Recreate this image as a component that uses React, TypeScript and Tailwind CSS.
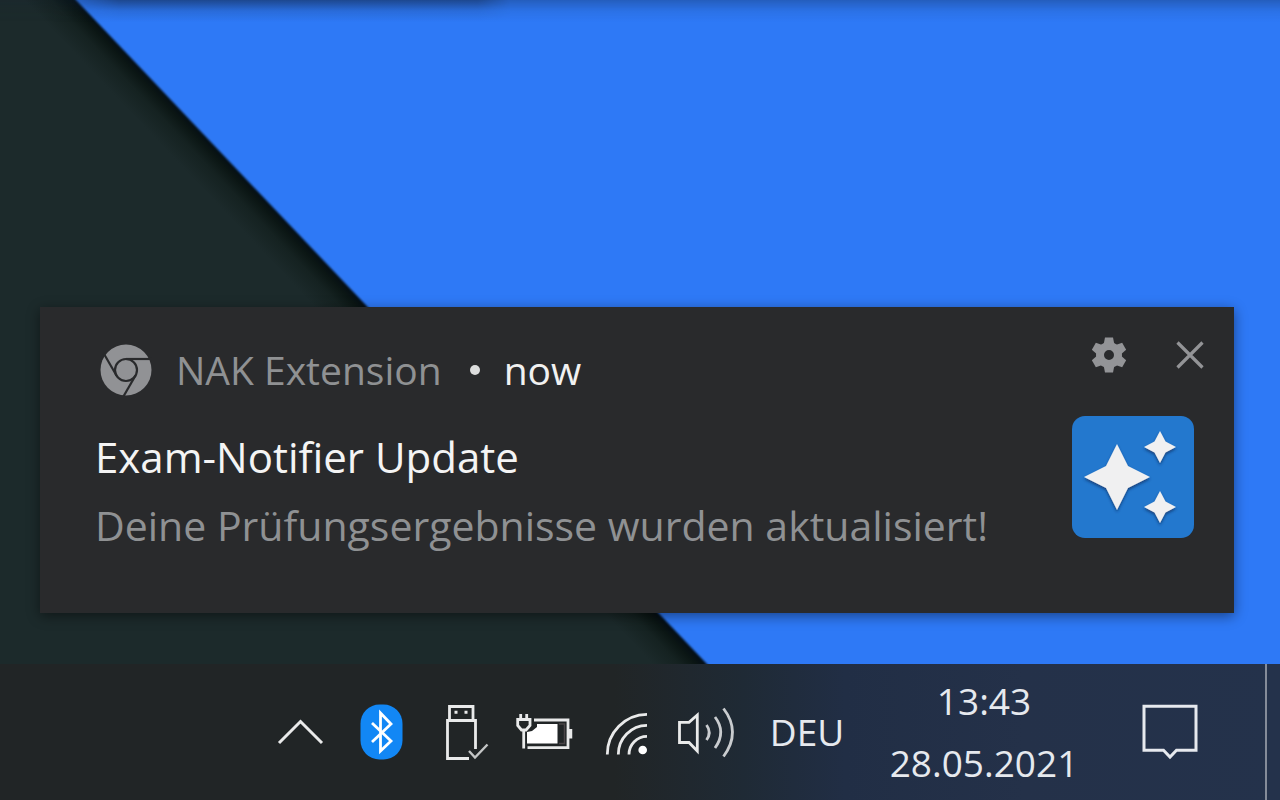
import type { ReactNode } from "react";

function Wallpaper() {
  return (
    <svg
      className="absolute inset-0 h-full w-full"
      viewBox="0 0 1280 800"
      preserveAspectRatio="xMinYMin slice"
      aria-hidden="true"
    >
      <defs>
        <linearGradient id="edge" gradientUnits="userSpaceOnUse" x1="222" y1="153" x2="194" y2="179.500">
          <stop offset="0" stopColor="#040d14" />
          <stop offset="0.2" stopColor="#0b1614" />
          <stop offset="0.5" stopColor="#152221" />
          <stop offset="1" stopColor="#1c2a2b" />
        </linearGradient>
        <linearGradient id="top" x1="0" y1="0" x2="0" y2="1">
          <stop offset="0" stopColor="#10203c" stopOpacity="0.55" />
          <stop offset="0.5" stopColor="#10203c" stopOpacity="0.15" />
          <stop offset="1" stopColor="#10203c" stopOpacity="0" />
        </linearGradient>
        <linearGradient id="fade" gradientUnits="userSpaceOnUse" x1="50" y1="0" x2="510" y2="0">
          <stop offset="0" stopColor="#fff" stopOpacity="0.2" />
          <stop offset="0.15" stopColor="#fff" />
          <stop offset="0.93" stopColor="#fff" />
          <stop offset="1" stopColor="#fff" stopOpacity="0.55" />
        </linearGradient>
        <mask id="topMask" maskUnits="userSpaceOnUse" x="0" y="0" width="1280" height="40">
          <rect width="1280" height="40" fill="url(#fade)" />
        </mask>
        <filter id="soft">
          <feGaussianBlur stdDeviation="1" />
        </filter>
      </defs>
      <rect width="1280" height="800" fill="url(#edge)" />
      <path d="M66.500-10 L836 800 H1300 V-10Z" fill="#2e79f6" filter="url(#soft)" />
      <rect width="1280" height="22" fill="url(#top)" mask="url(#topMask)" />
    </svg>
  );
}

function ChromeMark() {
  return (
    <svg className="size-[52px] shrink-0" viewBox="-26 -26 52 52" aria-hidden="true">
      <circle r="25.500" fill="#919295" />
      <g fill="none" stroke="#292a2c" strokeWidth="2.200">
        <circle r="11" />
        <path d="M0-11H26" />
        <path d="M0-11H26" transform="rotate(120)" />
        <path d="M0-11H26" transform="rotate(240)" />
      </g>
    </svg>
  );
}

function Gear() {
  return (
    <svg className="size-9" viewBox="-18 -18 36 36" fill="currentColor" aria-hidden="true">
      <path
        fillRule="evenodd"
        d="M-13 0A13 13 0 1 0 13 0A13 13 0 1 0-13 0ZM-5 0A5 5 0 1 1 5 0A5 5 0 1 1-5 0Z"
      />
      {[0, 60, 120, 180, 240, 300].map((angle) => (
        <path key={angle} d="M-5.500-10-4-17.500H4L5.500-10Z" transform={`rotate(${angle})`} />
      ))}
    </svg>
  );
}

function Sparkles() {
  return (
    <svg className="size-[122px]" viewBox="0 0 122 122" role="img" aria-label="NAK Extension">
      <defs>
        <filter id="starShadow">
          <feDropShadow dx="0" dy="2" stdDeviation="1.500" floodColor="#0c2c58" floodOpacity="0.7" />
        </filter>
      </defs>
      <rect width="122" height="122" rx="13" fill="#2378ce" />
      <g fill="#f0f0f1" filter="url(#starShadow)">
        <path d="M45 28 56 50 78 61 56 72 45 94 34 72 12 61 34 50Z" />
        <path d="M88 15 93.500 25.500 104 31 93.500 36.500 88 47 82.500 36.500 72 31 82.500 25.500Z" />
        <path d="M88 75 93.500 85.500 104 91 93.500 96.500 88 107 82.500 96.500 72 91 82.500 85.500Z" />
      </g>
    </svg>
  );
}

function Notification() {
  return (
    <article className="relative mr-[46px] mb-[51px] ml-10 flex h-[306px] justify-between bg-[#292a2c] pr-5 pl-[55px] shadow-[0_3px_12px_rgba(0,0,0,0.45)]">
      <div className="pt-9">
        <header className="flex h-[54px] items-center pl-[5px] text-[39px] whitespace-nowrap">
          <ChromeMark />
          <span className="ml-6 text-[#8f9193]">NAK Extension</span>
          <span className="ml-7 size-[10px] rounded-full bg-[#dcdddd]" />
          <time className="ml-6 text-[#f1f1f1]">now</time>
        </header>
        <h1 className="mt-[26px] text-[42px] leading-[68px] whitespace-nowrap text-[#f4f4f4]">
          Exam-Notifier Update
        </h1>
        <p className="text-[41px] leading-[68px] whitespace-nowrap text-[#8f9193]">
          Deine Prüfungsergebnisse wurden aktualisiert!
        </p>
      </div>
      <div className="flex flex-col items-end pt-6">
        <div className="flex gap-[33px] text-[#939497]">
          <button type="button" aria-label="Settings" className="grid size-12 place-items-center">
            <Gear />
          </button>
          <button type="button" aria-label="Close" className="grid size-12 place-items-center">
            <svg className="size-7" viewBox="0 0 28 28" fill="none" stroke="currentColor" strokeWidth="3.200">
              <path d="M1.500 1.500 26.500 26.500M26.500 1.500 1.500 26.500" />
            </svg>
          </button>
        </div>
        <div className="mt-[37px] mr-5">
          <Sparkles />
        </div>
      </div>
    </article>
  );
}

function TrayButton({ label, children }: { label: string; children: ReactNode }) {
  return (
    <button type="button" aria-label={label} className="w-[82px] shrink-0">
      <svg className="h-16 w-full" viewBox="0 0 82 64" fill="none" stroke="#e9eaea" strokeWidth="2.800">
        {children}
      </svg>
    </button>
  );
}

function Taskbar() {
  return (
    <footer className="relative flex h-[136px] items-center justify-end bg-[linear-gradient(90deg,#212526_0%,#212526_48%,#1f2a35_58%,#212e45_66%,#243149_80%,#24324b_100%)] text-[#e6e9ee]">
      <TrayButton label="Show hidden icons">
        <path d="M20 43 41.500 21.500 63 43" strokeWidth="3" />
      </TrayButton>
      <TrayButton label="Bluetooth">
        <rect x="19.500" y="4.500" width="42" height="55" rx="19" fill="#1287f5" stroke="none" />
        <path d="M31 23 50 41 39.500 51V13L50 24 31 42" stroke="#fff" />
      </TrayButton>
      <TrayButton label="Safely remove hardware">
        <path d="M26.500 20V6.500H50V20M46 58.500H24.500V20.500H52.500V49" />
        <path d="M46 51 52 57.500 64.500 44.500" stroke="#c4c6c6" strokeWidth="2.400" />
        <path d="M31.500 12.300h3M41.500 12.300h3" strokeWidth="3" />
      </TrayButton>
      <TrayButton label="Battery, plugged in">
        <path d="M29 20H63V47.700H22.500" />
        <path d="M65.500 29V38.500" strokeWidth="3.500" />
        <path d="M27 31 32 27V24H52.500V43.500H22V32Z" fill="#fff" stroke="none" />
        <path d="M54 24H59.500V43.500H54" stroke="#4a4547" strokeWidth="1.500" />
        <path d="M15.700 14V19M21.700 14V19M12.700 19.500H25V25.500L21 30H16.500L12.700 25.500Z" fill="#212526" />
        <path d="M18.700 30V48.500" />
      </TrayButton>
      <TrayButton label="Wi-Fi">
        <path d="M20.300 54.500A40 40 0 0 1 60 14.300M31.300 54.500A29 29 0 0 1 60 25.300M42 54.500A18 18 0 0 1 60 36.300" />
        <circle cx="55.700" cy="50" r="4.300" fill="#fff" stroke="none" />
      </TrayButton>
      <TrayButton label="Volume">
        <path d="M10.500 22.300H20L28.300 15V51L20 42.500H10.500Z" />
        <path d="M37.500 25Q43 32.500 37.500 40M46 17Q57.500 32 46 48M54.500 8.500Q72.500 32 54.500 56.500" stroke="#c9cccf" />
      </TrayButton>
      <button type="button" className="w-[112px] text-center text-[37px] leading-[62px]">
        DEU
      </button>
      <button type="button" className="w-[242px] text-center text-[37px] leading-[62px]">
        <time className="block">13:43</time>
        <time className="block">28.05.2021</time>
      </button>
      <button type="button" aria-label="Notifications" className="grid w-32 place-items-center">
        <svg className="h-16 w-[60px]" viewBox="0 0 60 64" fill="none" stroke="#e6e9ee" strokeWidth="3">
          <path d="M5 6.200H57V50.300H37.500L31 57 24.500 50.300H5Z" />
        </svg>
      </button>
      <button
        type="button"
        aria-label="Show desktop"
        className="ml-8 h-full w-[15px] border-l-2 border-[#858c99]"
      />
    </footer>
  );
}

export default function App() {
  return (
    <div className="relative flex min-h-screen flex-col overflow-hidden bg-[#1c2a2b] font-['Open_Sans','Noto_Sans',sans-serif]">
      <Wallpaper />
      <main className="relative flex flex-1 flex-col justify-end">
        <Notification />
      </main>
      <Taskbar />
    </div>
  );
}
